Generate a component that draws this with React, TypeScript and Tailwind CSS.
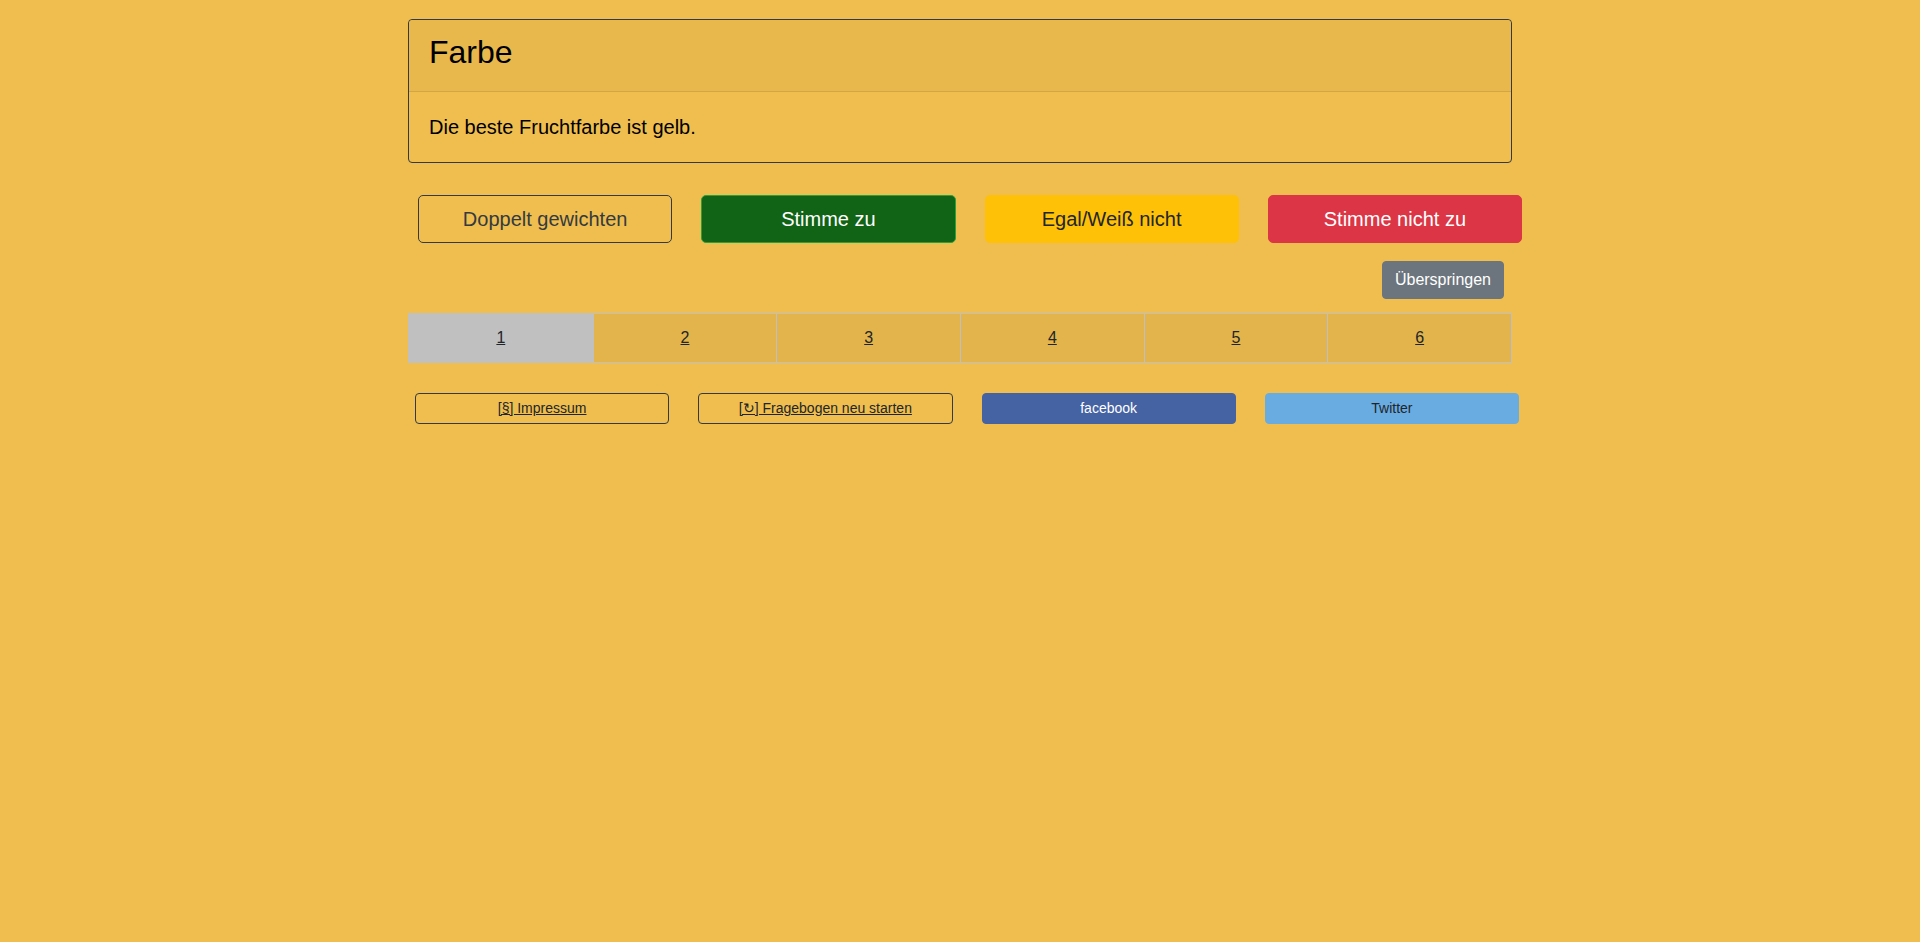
import { useState } from "react"

const pages = [1, 2, 3, 4, 5, 6]

function Card() {
  return (
    <div className="rounded border border-[#343a40]">
      <div className="border-b border-[#d1a645] bg-[#e8b84c] px-5 pt-[13px] pb-5 rounded-t">
        <h1 className="text-[32px] leading-[38px] text-black">Farbe</h1>
      </div>
      <div className="px-5 py-5">
        <p className="text-[20px] leading-[30px] text-black">Die beste Fruchtfarbe ist gelb.</p>
      </div>
    </div>
  )
}

function VoteButtons() {
  return (
    <div className="ml-[10px] mt-[32px] grid w-[1104px] grid-cols-4 gap-[29px]">
      <button className="rounded-[5px] border border-[#343a40] py-2 text-[20px] leading-[30px] text-[#343a40]">Doppelt gewichten</button>
      <button className="rounded-[5px] border border-[#2aa23c] bg-[#116316] py-2 text-[20px] leading-[30px] text-white">Stimme zu</button>
      <button className="rounded-[5px] border border-[#ffc107] bg-[#ffc107] py-2 text-[20px] leading-[30px] text-[#212529]">Egal/Weiß nicht</button>
      <button className="rounded-[5px] border border-[#dc3545] bg-[#dc3545] py-2 text-[20px] leading-[30px] text-white">Stimme nicht zu</button>
    </div>
  )
}

function Pagination({ active, onSelect }: { active: number, onSelect: (n: number) => void }) {
  return (
    <div className="mt-[14px] grid grid-cols-6 border border-[#c0c0c0]">
      {pages.map((p, i) =>
        <a key={p} href="#" onClick={(e) => { e.preventDefault(); onSelect(p) }}
          className={`py-3 text-center text-[16px] leading-6 text-[#212529] underline ${i > 0 ? 'border-l border-[#c0c0c0]' : ''} ${p === active ? 'bg-[#c0c0c0]' : 'bg-[#e3b44b]'}`}>
          {p}
        </a>
      )}
    </div>
  )
}

function Footer() {
  return (
    <div className="ml-[7px] mt-[30px] grid w-[1104px] grid-cols-4 gap-[29px] text-[14px] leading-[21px]">
      <a href="#" className="rounded border border-[#343a40] py-1 text-center text-[#212529] underline">[§] Impressum</a>
      <a href="#" className="rounded border border-[#343a40] py-1 text-center text-[#212529] underline">[↻] Fragebogen neu starten</a>
      <a href="#" className="rounded border border-[#4562a3] bg-[#4562a3] py-1 text-center text-white">facebook</a>
      <a href="#" className="rounded border border-[#69ace2] bg-[#69ace2] py-1 text-center text-[#212529]">Twitter</a>
    </div>
  )
}

export default function App() {
  const [active, set_active] = useState(1)

  return (
    <div className="min-h-[942px] w-full bg-[#efbe4f] font-['Liberation_Sans',Arial,sans-serif]">
      <div className="mx-auto w-[1104px] pt-[19px]">
        <Card />
        <VoteButtons />
        <div className="mt-[18px] flex justify-end pr-2">
          <button className="rounded bg-[#6c757d] border border-[#6c757d] px-3 py-1.5 text-[16px] leading-6 text-white">Überspringen</button>
        </div>
        <Pagination active={active} onSelect={set_active} />
        <Footer />
      </div>
    </div>
  )
}
